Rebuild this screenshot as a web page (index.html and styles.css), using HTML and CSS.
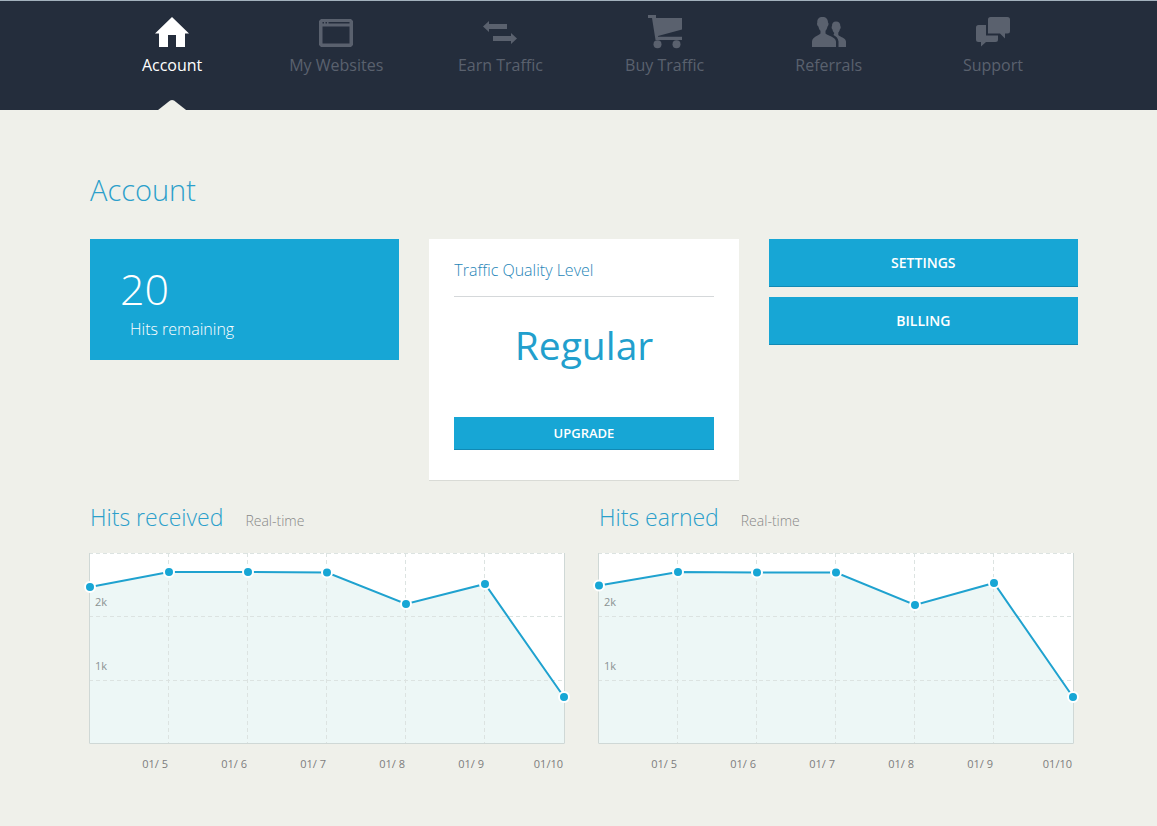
FILE: index.html
```html
<!DOCTYPE html>
<html lang="en">
<head>
<meta charset="utf-8">
<title>Account</title>
<meta name="viewport" content="width=device-width, initial-scale=1">
<link rel="stylesheet" href="styles.css">
</head>
<body>
<header class="topbar">
  <nav class="nav">
    <a class="nav-item active" href="#" aria-current="page">
      <svg class="nav-icon" viewBox="0 0 36 36"><path d="M18 2 1 18.500h4V32h9V20h8v12h9V18.500h4z"/></svg>
      <span>Account</span>
    </a>
    <a class="nav-item" href="#">
      <svg class="nav-icon" viewBox="0 0 36 36"><path fill-rule="evenodd" d="M3 4h30l2 2v24l-2 2H3l-2-2V6zM4.500 11.500v17h27v-17zM4.500 7v1.500H6V7zM7.500 7v1.500H9V7zM10.500 7v1.500h21V7z"/></svg>
      <span>My Websites</span>
    </a>
    <a class="nav-item" href="#">
      <svg class="nav-icon" viewBox="0 0 36 36"><path d="M1 11.500 7 6v3h18v5H7v3zM35 23.500 29 18v3H11v5h18v3z"/></svg>
      <span>Earn Traffic</span>
    </a>
    <a class="nav-item" href="#">
      <svg class="nav-icon" viewBox="0 0 36 36"><path d="M1 0h8v3h26v11.500L11 21v.8h24V25H8.500L5 3H1z"/><circle cx="10.500" cy="29.200" r="4"/><circle cx="29.500" cy="29.200" r="4"/></svg>
      <span>Buy Traffic</span>
    </a>
    <a class="nav-item" href="#">
      <svg class="nav-icon" viewBox="0 0 36 36"><path d="M11.500 2C15 2 17 4 17 7.500c1 .6.600 3.500-.6 4.200-.3 1.800-.9 3-1.900 4v2.800c2 2.500 10 3 10.500 8V32H1v-5.500c.5-5 6.500-5.500 8.500-8v-2.800c-1.200-1-1.700-2.200-2-4C6 11 5.700 8.200 6.300 7.500 6 4 8 2 11.500 2z"/><path d="M25 6.500c3 0 4.500 1.800 4.300 4.500.8.700.4 3-.5 3.500-.3 1.500-.8 2.300-1.500 3v2.600c1.700 2 7 2.500 7.700 6.400V32h-7.500v-5.500c-.5-3.500-2.200-5-5-6.500l.8-2c-1-.8-1.500-1.800-1.800-3.500-1-.6-1.200-2.800-.5-3.500-.2-2.700 1.300-4.500 4-4.500z"/></svg>
      <span>Referrals</span>
    </a>
    <a class="nav-item" href="#">
      <svg class="nav-icon" viewBox="0 0 36 36"><path d="M15.500 2H32.500Q35 2 35 4.500V16Q35 18.500 32.500 18.500H30V23.500L25 18.500H13V4.500Q13 2 15.500 2z"/><path d="M3.500 10H11V20.500H23V24.500Q23 27 20.500 27H11L6 31.500V27H3.500Q1 27 1 24.500V12.500Q1 10 3.500 10z"/></svg>
      <span>Support</span>
    </a>
  </nav>
</header>

<main class="page">
  <h1 class="page-title">Account</h1>

  <section class="cards">
    <div class="hits">
      <div class="hits-count">20</div>
      <div class="hits-label">Hits remaining</div>
    </div>
    <div class="quality">
      <h2 class="quality-title">Traffic Quality Level</h2>
      <div class="quality-level">Regular</div>
      <button class="btn btn-small" type="button">UPGRADE</button>
    </div>
    <div class="actions">
      <button class="btn" type="button">SETTINGS</button>
      <button class="btn" type="button">BILLING</button>
    </div>
  </section>

  <section class="charts">
    <article class="chart">
      <header class="chart-head"><h2 class="chart-title">Hits received</h2><span class="chart-note">Real-time</span></header>
      <svg class="plot" viewBox="0 0 476 191" role="img" aria-label="Hits received by day">
        <rect class="plot-bg" width="476" height="191"/>
        <path class="area" d="M1 34 80 19 159 19 238 19.500 317 51 396 31 475 144V190H1z"/>
        <path class="grid" d="M0 .5H476M0 63.500H476M0 127.500H476M79.500 0V190M158.500 0V190M237.500 0V190M316.500 0V190M395.500 0V190"/>
        <path class="frame" d="M.5 0V190.500H475.500V0"/>
        <text class="tick" x="6" y="53">2k</text><text class="tick" x="6" y="117">1k</text>
        <path class="line" d="M1 34 80 19 159 19 238 19.500 317 51 396 31 475 144"/>
        <g class="dots"><circle cx="1" cy="34" r="5"/><circle cx="80" cy="19" r="5"/><circle cx="159" cy="19" r="5"/><circle cx="238" cy="19.500" r="5"/><circle cx="317" cy="51" r="5"/><circle cx="396" cy="31" r="5"/><circle cx="475" cy="144" r="5"/></g>
      </svg>
      <div class="days"><span>01/ 5</span><span>01/ 6</span><span>01/ 7</span><span>01/ 8</span><span>01/ 9</span><span>01/10</span></div>
    </article>
    <article class="chart">
      <header class="chart-head"><h2 class="chart-title">Hits earned</h2><span class="chart-note">Real-time</span></header>
      <svg class="plot" viewBox="0 0 476 191" role="img" aria-label="Hits earned by day">
        <rect class="plot-bg" width="476" height="191"/>
        <path class="area" d="M1 32.500 80 19 159 19.500 238 19.500 317 52 396 30 475 144V190H1z"/>
        <path class="grid" d="M0 .5H476M0 63.500H476M0 127.500H476M79.500 0V190M158.500 0V190M237.500 0V190M316.500 0V190M395.500 0V190"/>
        <path class="frame" d="M.5 0V190.500H475.500V0"/>
        <text class="tick" x="6" y="53">2k</text><text class="tick" x="6" y="117">1k</text>
        <path class="line" d="M1 32.500 80 19 159 19.500 238 19.500 317 52 396 30 475 144"/>
        <g class="dots"><circle cx="1" cy="32.500" r="5"/><circle cx="80" cy="19" r="5"/><circle cx="159" cy="19.500" r="5"/><circle cx="238" cy="19.500" r="5"/><circle cx="317" cy="52" r="5"/><circle cx="396" cy="30" r="5"/><circle cx="475" cy="144" r="5"/></g>
      </svg>
      <div class="days"><span>01/ 5</span><span>01/ 6</span><span>01/ 7</span><span>01/ 8</span><span>01/ 9</span><span>01/10</span></div>
    </article>
  </section>
</main>
</body>
</html>
```

FILE: styles.css
```css
* { box-sizing: border-box; }

body {
  margin: 0;
  background: #eff0ea;
  color: #888;
  font-family: "Open Sans", "Noto Sans", sans-serif;
}

h1, h2 { margin: 0; font-weight: 300; }

.topbar {
  background: #242d3c;
  border-top: 1px solid #a3b1bd;
  padding: 0 82px 0 90px;
}

.nav {
  display: grid;
  grid-template-columns: repeat(6, 1fr);
}

.nav-item {
  display: flex;
  flex-direction: column;
  align-items: center;
  position: relative;
  height: 109px;
  padding-top: 14px;
  color: #5a616e;
  font-size: 16px;
  line-height: 24px;
  text-decoration: none;
}

.nav-icon {
  width: 36px;
  height: 36px;
  margin-bottom: 2px;
  fill: currentColor;
}

.nav-item.active { color: #fff; }

.nav-item.active::after {
  content: "";
  position: absolute;
  bottom: 0;
  left: 50%;
  width: 28px;
  height: 10px;
  margin-left: -14px;
  background: #eff0ea;
  clip-path: polygon(0 100%, 43% 6%, 50% 0, 57% 6%, 100% 100%);
}

.page { padding: 60px 79px 48px 90px; }

.page-title {
  color: #2b9fcb;
  font-size: 29px;
  line-height: 40px;
}

.cards {
  display: grid;
  grid-template-columns: repeat(3, 1fr);
  gap: 30px;
  align-items: start;
  margin-top: 29px;
}

.hits {
  padding: 24px 30px 17px;
  background: #17a6d5;
  color: #fff;
  font-weight: 300;
}

.hits-count { font-size: 43px; line-height: 52px; }

.hits-label {
  padding-left: 10px;
  font-size: 16px;
  line-height: 28px;
}

.quality {
  padding: 19px 25px 30px;
  background: #fff;
  border-bottom: 1px solid #d9dbd6;
}

.quality-title {
  padding-bottom: 14px;
  border-bottom: 1px solid #d5d8da;
  color: #1f86b8;
  font-size: 16px;
  line-height: 24px;
}

.quality-level {
  padding: 22px 0 46px;
  color: #229fcd;
  font-size: 39px;
  line-height: 52px;
  text-align: center;
}

.actions { display: grid; gap: 10px; }

.btn {
  display: block;
  width: 100%;
  height: 48px;
  padding: 0;
  border: 0;
  border-bottom: 1px solid #1189b4;
  background: #17a6d5;
  color: #fff;
  font-family: inherit;
  font-size: 14px;
  font-weight: 600;
}

.btn-small { height: 33px; font-size: 13px; }

.charts {
  display: grid;
  grid-template-columns: repeat(2, 1fr);
  gap: 33px;
  margin: 19px 4px 0 -1px;
}

.chart-head {
  display: flex;
  align-items: baseline;
  gap: 22px;
  margin-bottom: 19px;
  padding-left: 1px;
}

.chart-title {
  color: #2b9fcb;
  font-size: 23px;
  line-height: 34px;
}

.chart-note { font-size: 14px; font-weight: 300; }

.plot {
  display: block;
  width: 100%;
  overflow: visible;
}

.plot-bg { fill: #fff; }
.area { fill: #edf7f6; }
.grid { fill: none; stroke: #dce3e1; stroke-dasharray: 4 3; }
.frame { fill: none; stroke: #cfd8d6; }
.line { fill: none; stroke: #1fa2cf; stroke-width: 2; }
.dots { fill: #17a6d5; stroke: #fff; stroke-width: 2; }
.tick { fill: #8b9393; font-size: 11px; }

.days {
  display: grid;
  grid-template-columns: repeat(6, 1fr);
  padding-right: 2px;
  margin-top: 12px;
  color: #7d7d7d;
  font-size: 11px;
  line-height: 16px;
  text-align: right;
}
```
